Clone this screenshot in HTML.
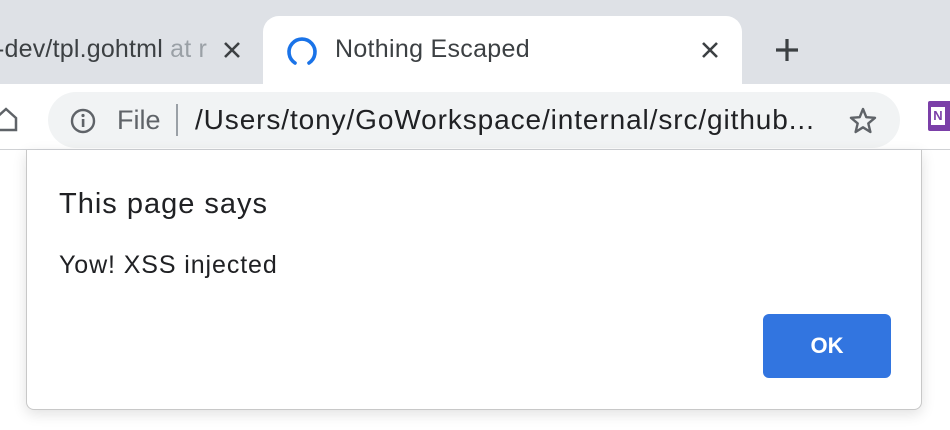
<!DOCTYPE html>
<html><head><meta charset="utf-8"><style>
*{margin:0;padding:0;box-sizing:border-box}
body{width:950px;height:430px;overflow:hidden;background:#fff;font-family:"Liberation Sans",sans-serif;position:relative}
.tabbar{position:absolute;left:0;top:0;width:950px;height:84px;background:#dee1e6}
.tab1text{position:absolute;left:-4px;top:35px;font-size:25px;color:#3c4043;white-space:nowrap;letter-spacing:0.2px}
.tab1text span{color:#9aa0a6}
.active{position:absolute;left:263px;top:16px;width:479px;height:70px;background:#fff;border-radius:16px 16px 0 0}
.toolbar{position:absolute;left:0;top:84px;width:950px;height:66px;background:#fff;border-bottom:1px solid #cfd1d4}
.omni{position:absolute;left:48px;top:8px;width:852px;height:56px;background:#f1f3f4;border-radius:28px}
.dialog{position:absolute;left:26px;top:150px;width:896px;height:260px;background:#fff;border:1px solid #c8c8c8;border-top:none;border-radius:0 0 8px 8px;box-shadow:0 4px 14px rgba(0,0,0,.12)}
.btn{position:absolute;left:736px;top:164px;width:128px;height:64px;background:#3275e0;border-radius:6px;color:#fff;font-size:22px;font-weight:bold;text-align:center;line-height:64px}
</style></head><body>
<div class="tabbar">
 <div class="tab1text">-dev/tpl.gohtml <span>at r</span></div>
 <div style="position:absolute;left:208px;top:20px;width:40px;height:60px;background:linear-gradient(to right,rgba(222,225,230,0),#dee1e6 60%)"></div>
 <svg style="position:absolute;left:222px;top:40px" width="20" height="20"><path d="M3 3L17 17M17 3L3 17" stroke="#3c4043" stroke-width="2.6"/></svg>
 <div class="active">
  <svg style="position:absolute;left:22px;top:18px" width="34" height="34"><path d="M10 29A13 13 0 1 1 24 29" fill="none" stroke="#1a73e8" stroke-width="3.6" stroke-linecap="round"/></svg>
  <div style="position:absolute;left:72px;top:19px;font-size:25px;color:#3c4043;letter-spacing:0.3px">Nothing Escaped</div>
  <svg style="position:absolute;left:437px;top:24px" width="20" height="20"><path d="M3 3L17 17M17 3L3 17" stroke="#3c4043" stroke-width="2.6"/></svg>
 </div>
 <svg style="position:absolute;left:774px;top:37px" width="26" height="26"><path d="M13 2V24M2 13H24" stroke="#3c4043" stroke-width="3.2"/></svg>
</div>
<div class="toolbar">
 <svg style="position:absolute;left:-6px;top:22px" width="24" height="26"><path d="M2 12L12 3L22 12V24H2Z" fill="none" stroke="#5f6368" stroke-width="2.5"/></svg>
 <div class="omni">
  <svg style="position:absolute;left:22px;top:16px" width="26" height="26"><circle cx="13" cy="13" r="11" fill="none" stroke="#5f6368" stroke-width="2.4"/><rect x="11.8" y="11" width="2.6" height="8" fill="#5f6368"/><circle cx="13" cy="7.5" r="1.6" fill="#5f6368"/></svg>
  <div style="position:absolute;left:69px;top:13px;font-size:27px;color:#5f6368">File</div>
  <div style="position:absolute;left:128px;top:12px;width:2px;height:32px;background:#9aa0a6"></div>
  <div style="position:absolute;left:147px;top:12px;font-size:28px;color:#202124;white-space:nowrap;letter-spacing:0.9px">/Users/tony/GoWorkspace/internal/src/github...</div>
  <svg style="position:absolute;left:800px;top:14px" width="30" height="30"><path d="M15 3L18.3 11.2L27 11.8L20.3 17.4L22.4 26L15 21.3L7.6 26L9.7 17.4L3 11.8L11.7 11.2Z" fill="none" stroke="#5f6368" stroke-width="2.4" stroke-linejoin="round"/></svg>
 </div>
 <div style="position:absolute;left:928px;top:17px;width:30px;height:30px;background:#7b3fa8;border-radius:2px"><div style="position:absolute;left:3px;top:6px;width:14px;height:18px;background:#fff;color:#7b3fa8;font-size:13px;font-weight:bold;text-align:center;line-height:18px">N</div></div>
</div>
<div class="dialog">
 <div style="position:absolute;left:32px;top:38px;font-size:29px;color:#202124;letter-spacing:1px;white-space:nowrap">This page says</div>
 <div style="position:absolute;left:32px;top:101px;font-size:25px;color:#202124;letter-spacing:0.9px;white-space:nowrap">Yow! XSS injected</div>
 <div class="btn">OK</div>
</div>
</body></html>
